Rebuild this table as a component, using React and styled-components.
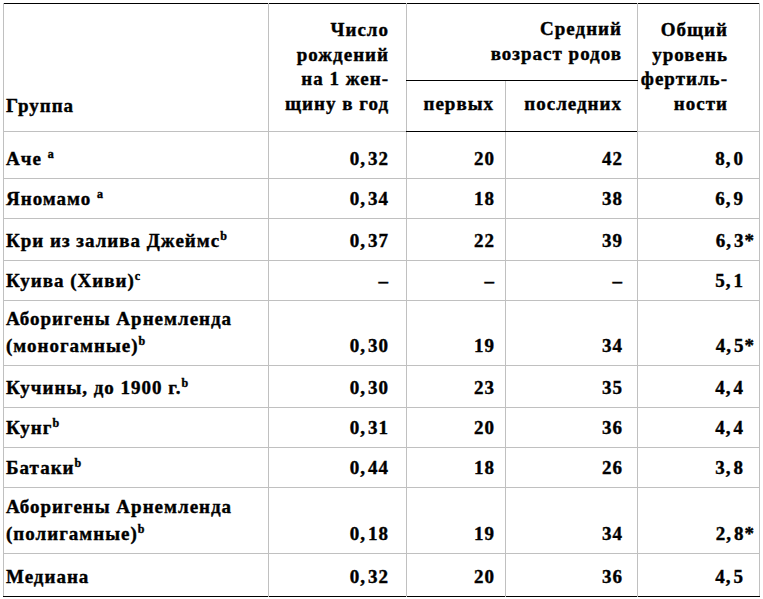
import React from 'react'
import styled, { createGlobalStyle } from 'styled-components'

const GlobalStyle = createGlobalStyle`
  html, body {
    margin: 0;
    padding: 0;
    background: #fff;
  }
  body {
    font-family: "Liberation Serif", "Times New Roman", serif;
    color: #000;
  }
`;

const Page = styled.div`
  padding: 3px 3px 0 3px;
`;

const Table = styled.table`
  width: 757px;
  border-collapse: collapse;
  table-layout: fixed;
  border-top: 1px solid #000;
  border-bottom: 1px solid #000;
  border-left: 1px solid #c0c0c0;
  border-right: 1px solid #c0c0c0;
  font-size: 19px;
  font-weight: bold;
  letter-spacing: 1px;
  -webkit-text-stroke: 0.4px #000;
`;

const Head = styled.thead`
  tr:last-child th {
    border-bottom: 1px solid #000;
  }
`;

const Th = styled.th`
  font-weight: bold;
  line-height: 24.5px;
  text-align: ${p => p.$align || 'right'};
  vertical-align: ${p => p.$valign || 'bottom'};
  padding: ${p => p.$pad || '0 16px 15px 0'};
  border-left: 1px solid #c0c0c0;
  border-bottom: ${p => (p.$split ? '1px solid #000' : 'none')};
  white-space: nowrap;
`;

const Row = styled.tr`
  height: ${p => p.$h}px;
`;

const Name = styled.td`
  text-align: left;
  vertical-align: bottom;
  line-height: 27px;
  padding: 0 0 6px 2px;
  border-top: 1px solid #c0c0c0;
`;

const Num = styled.td`
  text-align: right;
  vertical-align: bottom;
  line-height: 27px;
  padding: 0 ${p => p.$pr}px 6px 0;
  border-top: 1px solid #c0c0c0;
  border-left: 1px solid #c0c0c0;
  white-space: nowrap;
`;

const Comma = styled.span`
  margin-right: 2px;
`;

const Sup = styled.sup`
  font-size: 12px;
  line-height: 0;
  vertical-align: 7px;
  letter-spacing: 0;
`;

const Star = styled.span`
  margin-right: -10px;
  letter-spacing: 0;
`;

const rows = [
  { name: 'Аче', sup: 'a', gap: true, h: 47, v: ['0,32', '20', '42', '8,0'] },
  { name: 'Яномамо', sup: 'a', gap: true, h: 40, v: ['0,34', '18', '38', '6,9'] },
  { name: 'Кри из залива Джеймс', sup: 'b', h: 42, v: ['0,37', '22', '39', '6,3'], star: true },
  { name: 'Куива (Хиви)', sup: 'c', h: 40, v: ['–', '–', '–', '5,1'] },
  { name: ['Аборигены Арнемленда', '(моногамные)'], sup: 'b', h: 65, v: ['0,30', '19', '34', '4,5'], star: true },
  { name: 'Кучины, до 1900 г.', sup: 'b', h: 42, v: ['0,30', '23', '35', '4,4'] },
  { name: 'Кунг', sup: 'b', h: 40, v: ['0,31', '20', '36', '4,4'] },
  { name: 'Батаки', sup: 'b', h: 40, v: ['0,44', '18', '26', '3,8'] },
  { name: ['Аборигены Арнемленда', '(полигамные)'], sup: 'b', h: 66, v: ['0,18', '19', '34', '2,8'], star: true },
  { name: 'Медиана', h: 43, v: ['0,32', '20', '36', '4,5'] },
];

const pads = [17, 10, 14, 15];

const GroupName = ({ row }) => {
  const lines = Array.isArray(row.name) ? row.name : [row.name];
  return (
    <>
      {lines.map((l, i) => (
        <React.Fragment key={i}>
          {i > 0 && <br />}
          {l}
        </React.Fragment>
      ))}
      {row.sup && (
        <>
          {row.gap ? ' ' : ''}
          <Sup>{row.sup}</Sup>
        </>
      )}
    </>
  );
};

const Value = ({ text }) => {
  const [a, b] = text.split(',');
  if (b === undefined) return text;
  return (
    <>
      {a}
      <Comma>,</Comma>
      {b}
    </>
  );
};

export default function App() {
  return (
    <Page>
      <GlobalStyle />
      <Table>
        <colgroup>
          <col style={{ width: 265 }} />
          <col style={{ width: 138 }} />
          <col style={{ width: 99 }} />
          <col style={{ width: 132 }} />
          <col style={{ width: 122 }} />
        </colgroup>
        <Head>
          <Row $h={77}>
            <Th rowSpan={2} $align="left" $pad="0 0 13px 2px">Группа</Th>
            <Th rowSpan={2} $pad="0 17px 15px 0">
              Число<br />рождений<br />на 1 жен-<br />щину в год
            </Th>
            <Th colSpan={2} $valign="top" $split $pad="13px 15px 0 0">
              Средний<br />возраст родов
            </Th>
            <Th rowSpan={2} $pad="0 31px 15px 0">
              Общий<br />уровень<br />фертиль-<br />ности
            </Th>
          </Row>
          <Row $h={51}>
            <Th $pad="0 11px 15px 0">первых</Th>
            <Th $pad="0 15px 15px 0">последних</Th>
          </Row>
        </Head>
        <tbody>
          {rows.map((r, i) => (
            <Row key={i} $h={r.h}>
              <Name>
                <GroupName row={r} />
              </Name>
              {r.v.map((val, j) => (
                <Num key={j} $pr={pads[j]}>
                  <Value text={val} />
                  {j === 3 && r.star && <Star>*</Star>}
                </Num>
              ))}
            </Row>
          ))}
        </tbody>
      </Table>
    </Page>
  );
}
